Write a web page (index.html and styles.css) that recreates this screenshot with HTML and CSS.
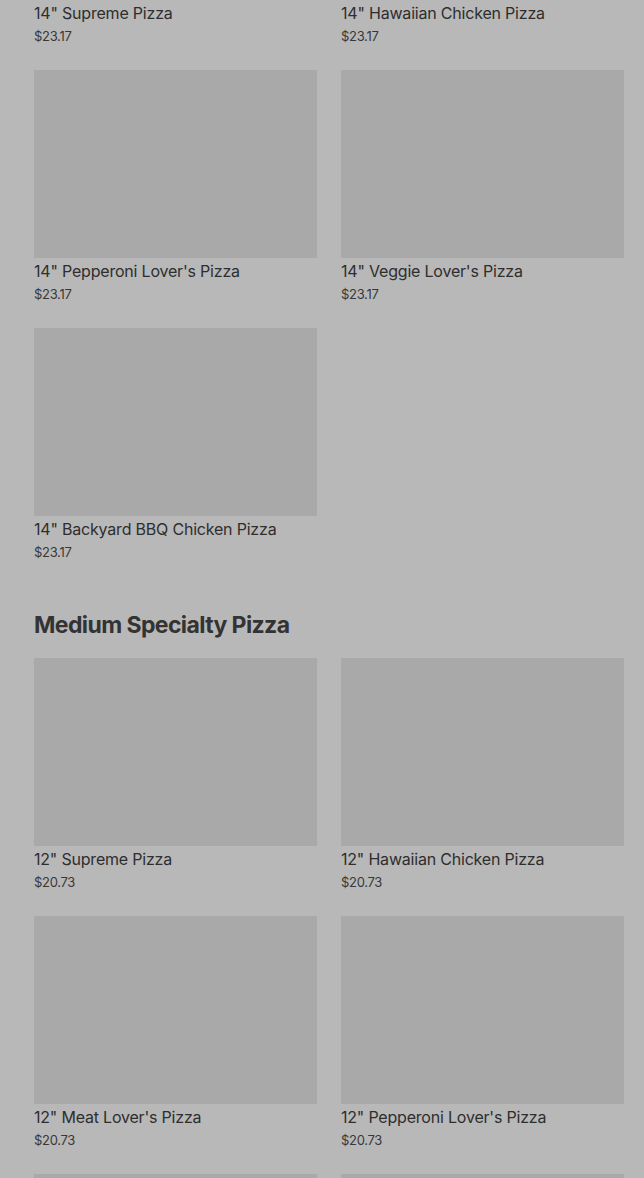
FILE: index.html
```html
<!DOCTYPE html>
<html lang="en">
<head>
  <meta charset="UTF-8">
  <title>Menu</title>
  <link rel="stylesheet" href="styles.css">
</head>
<body>

  <div class="menu">
    <section class="section first">
      <div class="item-grid">
        <div class="item">
          <div class="item-img"></div>
          <div class="item-name">14" Supreme Pizza</div>
          <div class="item-price">$23.17</div>
        </div>
        <div class="item">
          <div class="item-img"></div>
          <div class="item-name">14" Hawaiian Chicken Pizza</div>
          <div class="item-price">$23.17</div>
        </div>
        <div class="item">
          <div class="item-img"></div>
          <div class="item-name">14" Pepperoni Lover's Pizza</div>
          <div class="item-price">$23.17</div>
        </div>
        <div class="item">
          <div class="item-img"></div>
          <div class="item-name">14" Veggie Lover's Pizza</div>
          <div class="item-price">$23.17</div>
        </div>
        <div class="item">
          <div class="item-img"></div>
          <div class="item-name">14" Backyard BBQ Chicken Pizza</div>
          <div class="item-price">$23.17</div>
        </div>
      </div>
    </section>

    <section class="section">
      <h2 class="section-title">Medium Specialty Pizza</h2>
      <div class="item-grid">
        <div class="item">
          <div class="item-img"></div>
          <div class="item-name">12" Supreme Pizza</div>
          <div class="item-price">$20.73</div>
        </div>
        <div class="item">
          <div class="item-img"></div>
          <div class="item-name">12" Hawaiian Chicken Pizza</div>
          <div class="item-price">$20.73</div>
        </div>
        <div class="item">
          <div class="item-img"></div>
          <div class="item-name">12" Meat Lover's Pizza</div>
          <div class="item-price">$20.73</div>
        </div>
        <div class="item">
          <div class="item-img"></div>
          <div class="item-name">12" Pepperoni Lover's Pizza</div>
          <div class="item-price">$20.73</div>
        </div>
        <div class="item">
          <div class="item-img"></div>
        </div>
        <div class="item">
          <div class="item-img"></div>
        </div>
      </div>
    </section>
  </div>

</body>
</html>
```

FILE: styles.css
```css
body {
  margin: 0;
  font-family: Inter, "Noto Sans", sans-serif;
  background-color: #b8b8b8;
  color: #2e2e2e;
  overflow: hidden;
}
.menu {
  padding: 0 20px 0 34px;
}
.section.first {
  margin-top: -188px;
}
.section {
  margin-bottom: 48px;
}
.section-title {
  margin: 0 0 18px;
  font-size: 23px;
  line-height: 30px;
  font-weight: 700;
  letter-spacing: -0.6px;
  color: #333;
}
.item-grid {
  display: grid;
  grid-template-columns: 283px 283px;
  column-gap: 24px;
  row-gap: 24px;
}
.item-img {
  height: 188px;
  background-color: #a9a9a9;
}
.item-name {
  margin-top: 2px;
  font-size: 16px;
  line-height: 22px;
  font-weight: 400;
  letter-spacing: -0.2px;
}
.item-price {
  margin-top: 2px;
  font-size: 13px;
  line-height: 20px;
  letter-spacing: -0.3px;
  color: #383838;
}
```
